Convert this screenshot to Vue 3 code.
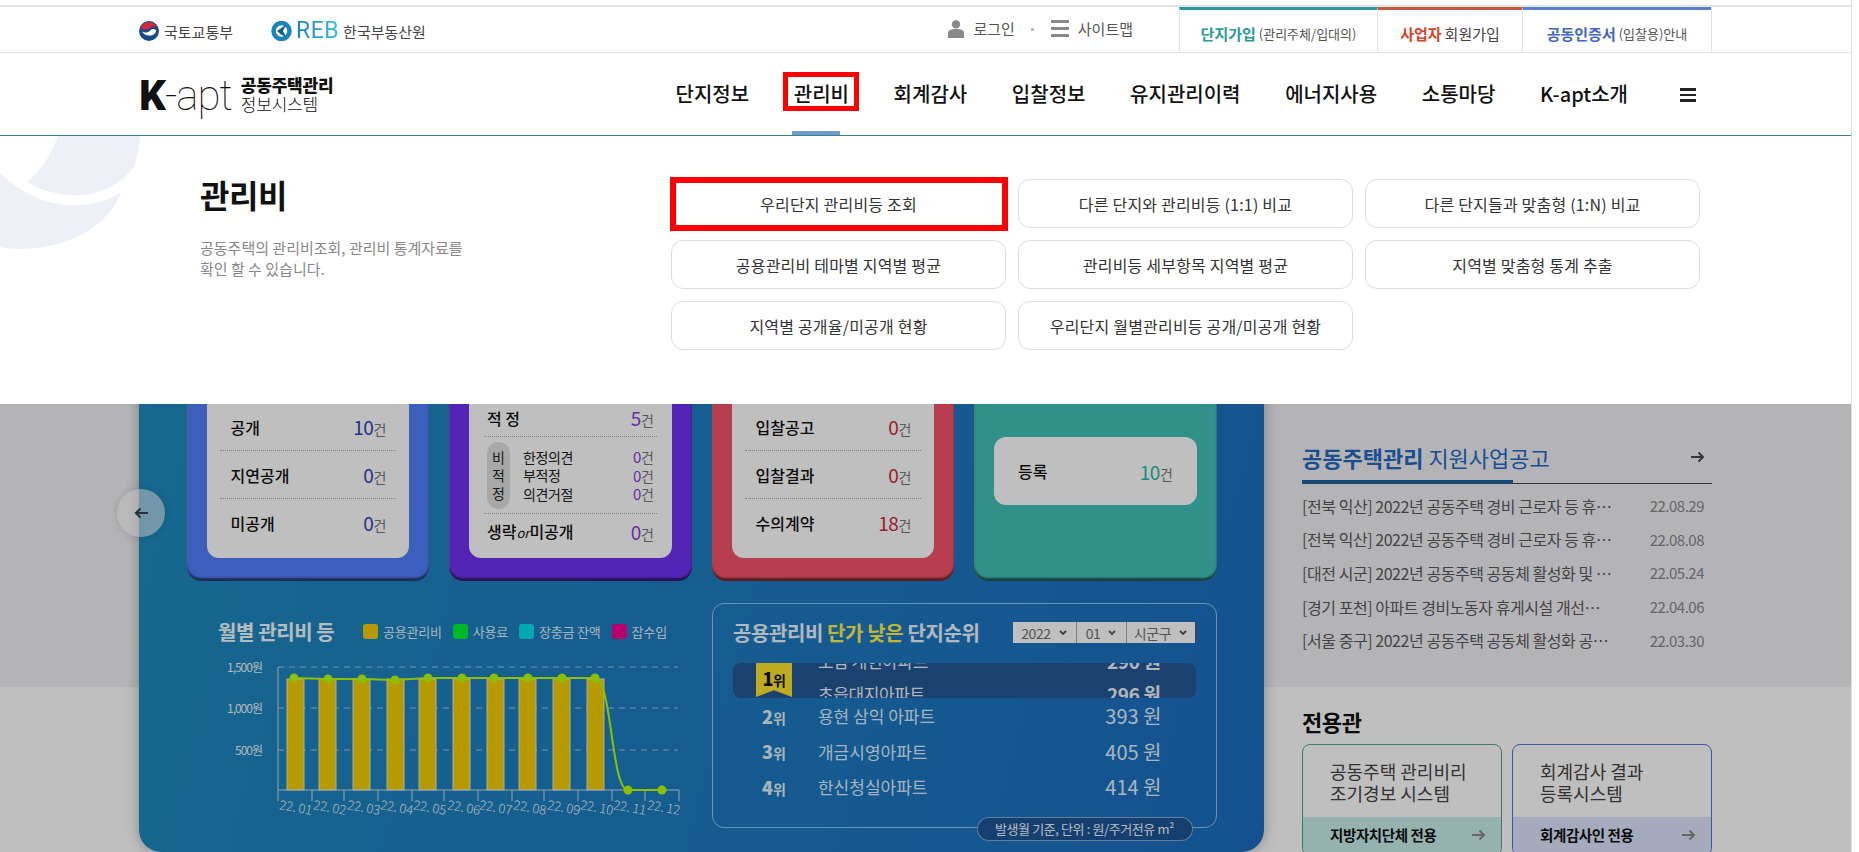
<template>
  <div class="page">
    <!-- 상단 유틸 바 -->
    <div class="top-bar">
      <div class="org org-molit">
        <svg width="20" height="20" viewBox="0 0 20 20">
          <circle cx="10" cy="10" r="10" fill="#174a8c" />
          <path d="M1.2 8.6A9 9 0 0 1 18.6 7.6C17 5 13.6 4.6 11.6 6.6 9.6 9 6 9.4 3.6 7.4 2.6 6.8 1.8 7.4 1.2 8.6Z" fill="#d5283a" />
          <path d="M3 10.4C5.6 12 9 11.8 11.2 9.4 13 7.4 16 7.6 17.2 9.8 16.4 13.4 13.2 15 10 14.6 6.8 14.2 4 12.8 3 10.4Z" fill="#fff" />
        </svg>
        <span>국토교통부</span>
      </div>
      <div class="org org-reb">
        <svg width="21" height="20" viewBox="0 0 21 20">
          <circle cx="10.5" cy="10" r="8" fill="none" stroke="#1a86b8" stroke-width="4.5" />
          <path d="M6 10 11 6.5 15 4 12 10 15 16 10 13.5Z" fill="#0f5d8c" />
        </svg>
        <span class="reb-mark">REB</span>
        <span>한국부동산원</span>
      </div>
      <div class="util">
        <svg width="16" height="18" viewBox="0 0 16 18" fill="#8a8a8a">
          <circle cx="8" cy="4.4" r="4.2" />
          <path d="M0 18V13C0 10 3 9 8 9S16 10 16 13V18Z" />
        </svg>
        <span class="util-text">로그인</span>
        <i class="util-dot"></i>
        <span class="util-burger"><b></b><b></b><b></b></span>
        <span class="util-text">사이트맵</span>
      </div>
      <div class="tabs">
        <a v-for="tab in tabs" :key="tab.strong" class="tab" :class="tab.cls">
          <strong>{{ tab.strong }}</strong>
          <span v-if="tab.big" class="tab-big"> {{ tab.big }}</span>
          <span v-if="tab.small" class="tab-small"> {{ tab.small }}</span>
        </a>
      </div>
    </div>

    <!-- 메인 메뉴 -->
    <div class="nav">
      <div class="logo">
        <div class="logo-mark"><b>K</b><span>-apt</span></div>
        <div class="logo-sub">
          <strong>공동주택관리</strong>
          <span>정보시스템</span>
        </div>
      </div>
      <ul class="menu">
        <li v-for="(m, i) in menus" :key="m" :class="{ active: i === 1 }">
          <span class="menu-text">{{ m }}</span>
        </li>
      </ul>
      <div class="nav-burger"><b></b><b></b><b></b></div>
    </div>

    <div class="stage">
      <div class="main-card">
        <div class="summary">
          <div class="card card-blue">
            <div class="inner">
              <div class="rows">
                <div v-for="r in openRows" :key="r.label" class="row">
                  <span class="row-label">{{ r.label }}</span>
                  <span class="row-num"><em>{{ r.num }}</em>건</span>
                </div>
              </div>
            </div>
          </div>
          <div class="card card-purple">
            <div class="inner">
              <div class="audit">
                <div class="row audit-row">
                  <span class="row-label">적 정</span>
                  <span class="row-num"><em>5</em>건</span>
                </div>
                <div class="audit-sub">
                  <div class="audit-pill"><span>비</span><span>적</span><span>정</span></div>
                  <div class="audit-list">
                    <div v-for="s in auditRows" :key="s" class="audit-item">
                      <span>{{ s }}</span>
                      <span class="row-num small"><em>0</em>건</span>
                    </div>
                  </div>
                </div>
                <div class="row audit-row last">
                  <span class="row-label">생략<small>or</small>미공개</span>
                  <span class="row-num"><em>0</em>건</span>
                </div>
              </div>
            </div>
          </div>
          <div class="card card-red">
            <div class="inner">
              <div class="rows">
                <div v-for="r in bidRows" :key="r.label" class="row">
                  <span class="row-label">{{ r.label }}</span>
                  <span class="row-num"><em>{{ r.num }}</em>건</span>
                </div>
              </div>
            </div>
          </div>
          <div class="card card-teal">
            <div class="inner inner-single">
              <span class="row-label">등록</span>
              <span class="row-num"><em>10</em>건</span>
            </div>
          </div>
        </div>

        <div class="lower">
          <div class="chart-col">
            <div class="chart-head">
              <h3>월별 관리비 등</h3>
              <ul class="legend">
                <li v-for="l in legend" :key="l.name">
                  <i :style="{ background: l.color }"></i>{{ l.name }}
                </li>
              </ul>
            </div>
            <svg class="chart" width="500" height="170" viewBox="190 655 500 170">
              <line v-for="g in grid" :key="g.y" x1="278" x2="678" :y1="g.y" :y2="g.y" class="grid-line" />
              <text v-for="g in grid" :key="g.label" x="262" :y="g.y + 5" text-anchor="end" class="y-label">{{ g.label }}</text>
              <rect v-for="b in bars" :key="b" :x="b" y="679" width="17" height="111" class="bar" />
              <path d="M278 667V790H679V801" class="axis" />
              <line v-for="t in ticks" :key="t" :x1="t" :x2="t" y1="790" y2="801" class="axis" />
              <path :d="linePath" class="trend" />
              <circle v-for="p in points" :key="p.x" :cx="p.x" :cy="p.y" r="4.5" class="dot" />
              <text v-for="m in months" :key="m.label" :transform="`translate(${m.x + 1} 812) rotate(10)`" text-anchor="middle" class="x-label">{{ m.label }}</text>
            </svg>
          </div>

          <div class="rank">
            <div class="rank-head">
              <h3>공용관리비 <span>단가 낮은</span> 단지순위</h3>
              <div class="selects">
                <div v-for="s in selects" :key="s.text" class="sel" :class="s.cls">
                  {{ s.text }}
                  <svg width="8" height="6" viewBox="0 0 8 6"><path d="M1 1 4 4 7 1" fill="none" stroke="#555" stroke-width="1.8" /></svg>
                </div>
              </div>
            </div>
            <div class="ticker">
              <div class="ticker-track">
                <div v-for="t in tickerRows" :key="t.name" class="ticker-row">
                  <span>{{ t.name }}</span>
                  <b>{{ t.cost }} 원</b>
                </div>
              </div>
              <div class="ribbon"><b>1</b>위</div>
            </div>
            <div v-for="r in ranks" :key="r.no" class="rank-row">
              <span class="rank-no"><b>{{ r.no }}</b>위</span>
              <span class="rank-name">{{ r.name }}</span>
              <span>{{ r.cost }} 원</span>
            </div>
            <div class="rank-note">발생월 기준, 단위 : 원/주거전유 m²</div>
          </div>
        </div>
      </div>

      <div class="side">
        <div class="notice-head">
          <h3><strong>공동주택관리</strong> 지원사업공고</h3>
          <svg class="notice-arrow" width="14" height="12" viewBox="0 0 14 12"><path d="M0 6H12M7.5 1.5 12 6 7.5 10.5" fill="none" stroke="#4a4a4a" stroke-width="2" /></svg>
        </div>
        <ul class="notices">
          <li v-for="n in notices" :key="n.date">
            <span class="notice-title">{{ n.title }}</span>
            <span class="notice-date">{{ n.date }}</span>
          </li>
        </ul>
        <h3 class="only-title">전용관</h3>
        <div class="only-cards">
          <div v-for="o in onlyCards" :key="o.foot" class="only" :class="o.cls">
            <div class="only-body">{{ o.line1 }}<br />{{ o.line2 }}</div>
            <div class="only-foot">
              <span>{{ o.foot }}</span>
              <svg width="14" height="12" viewBox="0 0 14 12"><path d="M0 6H12M7.5 1.5 12 6 7.5 10.5" fill="none" stroke="#8a8a8a" stroke-width="2" /></svg>
            </div>
          </div>
        </div>
      </div>

      <div class="prev-btn">
        <svg width="14" height="12" viewBox="0 0 14 12"><path d="M14 6H2M6.5 1.5 2 6 6.5 10.5" fill="none" stroke="#33444e" stroke-width="2.2" /></svg>
      </div>

      <!-- 메뉴 열림 시 딤 처리 -->
      <div class="dim"></div>

      <div class="panel">
        <svg class="panel-deco" width="150" height="120" viewBox="0 136 150 120">
          <path d="M58 136H140C139 150 137 160 133 168 118 187 95 197 70 195 55 194 40 190 27 182 42 170 50 155 58 136Z" fill="#edf1f7" />
          <path d="M0 173C20 192 45 204 67 205 90 206 107 202 121 192 110 225 70 249 18 249 12 249 5 248 0 247Z" fill="#edf1f7" />
        </svg>
        <div class="panel-info">
          <h2>관리비</h2>
          <p>공동주택의 관리비조회, 관리비 통계자료를<br />확인 할 수 있습니다.</p>
        </div>
        <div class="panel-links">
          <a v-for="(p, i) in panelLinks" :key="p" class="panel-link" :class="{ marked: i === 0 }">{{ p }}</a>
        </div>
      </div>
    </div>
  </div>
</template>

<script setup>
const tabs = [
  { strong: '단지가입', small: '(관리주체/입대의)', cls: 'tab-teal' },
  { strong: '사업자', big: '회원가입', cls: 'tab-red' },
  { strong: '공동인증서', small: '(입찰용)안내', cls: 'tab-blue' }
]

const menus = ['단지정보', '관리비', '회계감사', '입찰정보', '유지관리이력', '에너지사용', '소통마당', 'K-apt소개']

const panelLinks = [
  '우리단지 관리비등 조회',
  '다른 단지와 관리비등 (1:1) 비교',
  '다른 단지들과 맞춤형 (1:N) 비교',
  '공용관리비 테마별 지역별 평균',
  '관리비등 세부항목 지역별 평균',
  '지역별 맞춤형 통계 추출',
  '지역별 공개율/미공개 현황',
  '우리단지 월별관리비등 공개/미공개 현황'
]

const openRows = [
  { label: '공개', num: 10 },
  { label: '지연공개', num: 0 },
  { label: '미공개', num: 0 }
]
const auditRows = ['한정의견', '부적정', '의견거절']
const bidRows = [
  { label: '입찰공고', num: 0 },
  { label: '입찰결과', num: 0 },
  { label: '수의계약', num: 18 }
]

const legend = [
  { name: '공용관리비', color: '#f5cd00' },
  { name: '사용료', color: '#00f535' },
  { name: '장충금 잔액', color: '#00e0eb' },
  { name: '잡수입', color: '#f50093' }
]

const grid = [
  { y: 667, label: '1,500원' },
  { y: 708, label: '1,000원' },
  { y: 750, label: '500원' }
]
const bars = [287, 319, 353, 387, 419, 453, 487, 519, 553, 587]
const ticks = [278, 312, 344, 378, 412, 444, 478, 512, 544, 578, 612, 645]
const pointX = [294, 328, 362, 395, 428, 462, 494, 528, 562, 595, 628, 662]
const pointY = [678, 679, 679, 680, 678, 678, 678, 678, 678, 678, 790, 790]
const points = pointX.map((x, i) => ({ x, y: pointY[i] }))
const linePath =
  points.slice(0, 10).map((p, i) => `${i ? 'L' : 'M'}${p.x} ${p.y}`).join(' ') +
  ' C612 678 611 790 628 790 L662 790'
const months = pointX.map((x, i) => ({ x, label: `22. ${String(i + 1).padStart(2, '0')}` }))

const selects = [
  { text: '2022', cls: 'sel-year' },
  { text: '01', cls: 'sel-month' },
  { text: '시군구', cls: 'sel-area' }
]
const tickerRows = [
  { name: '보람 개현아파트', cost: 290 },
  { name: '초읍대지아파트', cost: 296 }
]
const ranks = [
  { no: 2, name: '용현 삼익 아파트', cost: 393 },
  { no: 3, name: '개금시영아파트', cost: 405 },
  { no: 4, name: '한신청실아파트', cost: 414 }
]

const notices = [
  { title: '[전북 익산] 2022년 공동주택 경비 근로자 등 휴게시설 개선 지원사업', date: '22.08.29' },
  { title: '[전북 익산] 2022년 공동주택 경비 근로자 등 휴게시설 지원', date: '22.08.08' },
  { title: '[대전 시군] 2022년 공동주택 공동체 활성화 및 지원사업 공고', date: '22.05.24' },
  { title: '[경기 포천] 아파트 경비노동자 휴게시설 개선사업 안내', date: '22.04.06' },
  { title: '[서울 중구] 2022년 공동주택 공동체 활성화 공모사업', date: '22.03.30' }
]

const onlyCards = [
  { line1: '공동주택 관리비리', line2: '조기경보 시스템', foot: '지방자치단체 전용', cls: 'only-teal' },
  { line1: '회계감사 결과', line2: '등록시스템', foot: '회계감사인 전용', cls: 'only-blue' }
]
</script>

<style scoped>
.page {
  width: 1851px;
  height: 852px;
  overflow: hidden;
  border-right: 1px solid #dedede;
  background: #fff;
  font-family: "Noto Sans CJK KR", "Noto Sans", sans-serif;
  color: #333;
  letter-spacing: -0.4px;
}

h2, h3, p, ul {
  margin: 0;
  padding: 0;
  list-style: none;
}

em {
  font-style: normal;
}

/* top bar */
.top-bar {
  display: flex;
  align-items: center;
  height: 45px;
  margin-top: 5px;
  padding: 0 139px;
  border-top: 2px solid #e1e5e5;
  border-bottom: 1px solid #e6e6e6;
  box-sizing: content-box;
}

.org {
  display: flex;
  align-items: center;
  gap: 5px;
  font-size: 15px;
  letter-spacing: 0;
  color: #444;
  padding-top: 3px;
}

.org-reb {
  margin-left: 38px;
  gap: 4px;
}

.reb-mark {
  font-family: Roboto, sans-serif;
  font-size: 23px;
  line-height: 20px;
  font-weight: 400;
  letter-spacing: 0.5px;
  color: transparent;
  background: linear-gradient(90deg, #1f7fc0, #35c0e8);
  -webkit-background-clip: text;
  background-clip: text;
}

.util {
  display: flex;
  align-items: center;
  margin-left: auto;
  margin-right: 46px;
  margin-top: -2px;
  font-size: 15px;
  letter-spacing: 0;
  color: #555;
}

.util-text {
  margin-left: 9px;
}

.util-dot {
  width: 3px;
  height: 3px;
  margin: 2px 17px 0 16px;
  background: #bbb;
}

.util-burger {
  display: flex;
  flex-direction: column;
  gap: 4px;
  width: 18px;
}

.util-burger b {
  height: 3px;
  background: #8a8a8a;
}

.tabs {
  display: flex;
  align-self: stretch;
  border-right: 1px solid #e2e2e2;
}

.tab {
  display: flex;
  align-items: center;
  justify-content: center;
  gap: 3px;
  box-sizing: border-box;
  height: 45px;
  padding-top: 4px;
  border-top: 3px solid;
  border-left: 1px solid #e2e2e2;
  font-size: 15px;
  letter-spacing: 0;
  white-space: pre;
}

.tab strong {
  font-weight: 700;
}

.tab-big {
  color: #444;
}

.tab-small {
  font-size: 13px;
  color: #555;
}

.tab-teal { width: 198px; border-top-color: #2a9a9e; }
.tab-teal strong { color: #2a9a9e; }
.tab-red { width: 145px; border-top-color: #c9573f; }
.tab-red strong { color: #d2452c; }
.tab-blue { width: 189px; border-top-color: #5a7ed0; }
.tab-blue strong { color: #3f66c2; }

/* nav */
.nav {
  display: flex;
  align-items: stretch;
  height: 82px;
  padding: 0 155px 0 139px;
  border-bottom: 1px solid #3f7f90;
  box-sizing: content-box;
}

.logo {
  display: flex;
  align-items: center;
  gap: 9px;
  padding-top: 4px;
}

.logo-mark {
  font-family: Roboto, sans-serif;
  font-size: 42px;
  line-height: 48px;
  letter-spacing: -1px;
  color: #111;
}

.logo-mark b {
  font-weight: 900;
}

.logo-mark span {
  font-weight: 100;
}

.logo-sub {
  display: flex;
  flex-direction: column;
  font-size: 17px;
  line-height: 19px;
  letter-spacing: -0.2px;
  color: #111;
  margin-top: -5px;
}

.logo-sub strong {
  font-weight: 900;
}

.logo-sub span {
  font-weight: 300;
}

.menu {
  display: flex;
  gap: 44.65px;
  margin-left: auto;
  font-size: 20px;
  font-weight: 500;
  color: #111;
  letter-spacing: 0;
}

.menu li {
  position: relative;
  display: flex;
  align-items: center;
}

.menu-text {
  position: relative;
  line-height: 28px;
}

.active .menu-text::after {
  content: '';
  position: absolute;
  inset: -8px -10px -3px -11px;
  border: 5px solid #f00;
}

.active::before {
  content: '';
  position: absolute;
  left: -2px;
  bottom: 0;
  width: 48px;
  height: 4px;
  background: #6f9fc8;
}

.nav-burger {
  display: flex;
  flex-direction: column;
  justify-content: center;
  gap: 3px;
  width: 16px;
  margin-left: 52px;
  padding-top: 2px;
}

.nav-burger b {
  height: 2.5px;
  background: #222;
}

/* stage */
.stage {
  position: relative;
  display: flex;
  height: 716px;
  padding-left: 139px;
  background: linear-gradient(#f1f1f5 551px, #fff 551px);
}

.main-card {
  width: 1125px;
  height: 652px;
  margin-top: 64px;
  padding: 140px 47.5px 0;
  box-sizing: border-box;
  border-radius: 22px;
  background: linear-gradient(105deg, #1f8cbf, #1c6dc0);
  box-shadow: 0 0 14px rgba(0, 0, 0, 0.3);
}

.summary {
  display: grid;
  grid-template-columns: repeat(4, 242.5px);
  gap: 20px;
}

.card {
  display: flex;
  flex-direction: column;
  box-sizing: border-box;
  height: 241px;
  padding: 38px 20px 23px;
  border-radius: 14px;
  box-shadow: inset 0 -3px 2px rgba(0, 0, 0, 0.55), inset 1px 0 1px rgba(255, 255, 255, 0.2);
}

.card-blue { background: #517ffc; }
.card-purple { background: #7131f5; }
.card-red { background: #f55368; }
.card-teal { background: #40c1b8; }
.card-blue em { color: #2d44b8; }
.card-purple em { color: #8a3ee0; }
.card-red em { color: #c92a40; }
.card-teal em { color: #29b8ab; }

.inner {
  flex: 1;
  border-radius: 12px;
  background: #fff;
}

.inner-single {
  flex: none;
  display: flex;
  align-items: center;
  justify-content: space-between;
  height: 68px;
  margin-top: 59px;
  padding: 0 24px;
}

.rows {
  margin: 25px 13px 0;
}

.row {
  display: flex;
  align-items: center;
  justify-content: space-between;
  height: 47px;
  padding: 0 10px 0 11px;
  border-bottom: 1px dotted #aaa;
}

.row:last-child {
  border-bottom: 0;
}

.row-label {
  font-size: 16px;
  font-weight: 500;
  letter-spacing: 0;
  color: #111;
}

.row-label small {
  font-size: 13px;
  font-weight: 400;
  font-style: italic;
}

.row-num {
  font-size: 14px;
  color: #777;
}

.row-num em {
  font-size: 19px;
}

.row-num.small em {
  font-size: 15px;
}

.audit {
  margin: 21px 15px 0;
}

.audit-row {
  height: 37px;
  padding: 0 3px;
}

.audit-row.last {
  height: 34px;
}

.audit-sub {
  display: flex;
  align-items: center;
  height: 76px;
  padding: 0 3px;
  border-bottom: 1px dotted #aaa;
}

.audit-pill {
  display: flex;
  flex-direction: column;
  align-items: center;
  justify-content: center;
  width: 22.5px;
  height: 67px;
  gap: 0;
  border-radius: 12px;
  background: #e1e1e1;
  font-size: 14px;
  line-height: 18px;
  color: #222;
}

.audit-list {
  flex: 1;
  margin-left: 13.5px;
}

.audit-item {
  display: flex;
  align-items: center;
  justify-content: space-between;
  height: 18.5px;
  font-size: 14px;
  color: #222;
}

/* chart */
.lower {
  display: flex;
  margin-top: 22px;
}

.chart-col {
  width: 526px;
  padding-left: 3.5px;
  box-sizing: border-box;
}

.chart-head {
  display: flex;
  align-items: center;
  height: 22px;
  margin: 17px 0 13px;
  padding-left: 28px;
}

.chart-head h3 {
  width: 117px;
  font-size: 20px;
  font-weight: 700;
  white-space: nowrap;
  color: #f0fbff;
}

.legend {
  display: flex;
  gap: 11px;
  margin-left: 28px;
  font-size: 13px;
  letter-spacing: -0.2px;
  color: #dff0fa;
}

.legend li {
  display: flex;
  align-items: center;
  gap: 5px;
  white-space: nowrap;
}

.legend i {
  width: 15px;
  height: 15px;
  border-radius: 3px;
}

.chart {
  display: block;
}

.grid-line {
  stroke: #e0eef8;
  stroke-opacity: 0.65;
  stroke-dasharray: 6 5;
}

.axis {
  fill: none;
  stroke: #c8dde8;
  stroke-width: 1;
}

.bar {
  fill: #f5cd00;
  stroke: #e8e8d8;
  stroke-width: 1;
}

.trend {
  fill: none;
  stroke: #bbff00;
  stroke-width: 2;
}

.dot {
  fill: #bbff00;
}

.y-label {
  font-size: 12px;
  letter-spacing: -1px;
  fill: #e8f4fb;
}

.x-label {
  font-size: 13px;
  font-weight: 300;
  letter-spacing: -0.2px;
  fill: #e8f4fb;
}

/* rank */
.rank {
  position: relative;
  box-sizing: border-box;
  width: 505px;
  height: 225px;
  padding: 18px 20px 0;
  border: 1px solid rgba(210, 235, 250, 0.65);
  border-radius: 12px;
}

.rank-head {
  display: flex;
  align-items: center;
  justify-content: space-between;
  height: 21px;
}

.rank-head h3 {
  font-size: 20px;
  font-weight: 700;
  white-space: nowrap;
  letter-spacing: -0.4px;
  color: #eaf6ff;
}

.rank-head h3 span {
  color: #fff24a;
}

.selects {
  display: flex;
  height: 21px;
  background: #fff;
  border-right: 1px solid #555;
  font-size: 14px;
  color: #707070;
}

.sel {
  display: flex;
  align-items: center;
  justify-content: center;
  gap: 8px;
  box-sizing: border-box;
  border-left: 1px solid #aaa;
}

.sel:first-child {
  border-left: 0;
}

.sel-year { width: 63px; }
.sel-month { width: 50px; }
.sel-area { width: 69px; }

.ticker {
  position: relative;
  height: 35px;
  margin-top: 20px;
  overflow: hidden;
  border-radius: 8px;
  background: #245895;
}

.ticker-track {
  margin-top: -19.5px;
}

.ticker-row {
  display: flex;
  justify-content: space-between;
  height: 33px;
  padding: 0 35px 0 85px;
  font-size: 17px;
  line-height: 33px;
  color: #e8f4ff;
}

.ticker-row b {
  font-size: 19px;
  font-weight: 700;
}

.ribbon {
  position: absolute;
  left: 23px;
  top: 0;
  width: 36px;
  height: 34px;
  padding-top: 4px;
  box-sizing: border-box;
  text-align: center;
  font-size: 14px;
  font-weight: 700;
  line-height: 22px;
  color: #111;
  background: #ffe52b;
  clip-path: polygon(0 0, 100% 0, 100% 100%, 50% 80%, 0 100%);
}

.ribbon b {
  font-size: 18px;
}

.rank-row {
  display: grid;
  grid-template-columns: 55px 1fr auto;
  align-items: center;
  height: 35.5px;
  padding: 0 34px 0 29px;
  font-size: 20px;
  letter-spacing: 0;
  color: #dff0fa;
}

.rank-no {
  font-size: 14px;
  font-weight: 700;
}

.rank-no b {
  font-size: 18px;
}

.rank-name {
  padding-left: 1px;
  font-size: 17px;
}

.rank-note {
  position: absolute;
  right: 23px;
  bottom: -14px;
  box-sizing: border-box;
  width: 216px;
  height: 24px;
  border: 1px solid rgba(210, 235, 250, 0.55);
  border-radius: 12px;
  background: #1d5495;
  text-align: center;
  font-size: 13px;
  line-height: 22px;
  color: #eff8ff;
}

/* side */
.side {
  width: 410px;
  margin-left: 38px;
  padding-top: 308px;
  box-sizing: border-box;
}

.notice-head {
  display: flex;
  align-items: flex-start;
  justify-content: space-between;
  height: 39px;
  padding-right: 7px;
  border-bottom: 1px solid #444;
  position: relative;
}

.notice-head::after {
  content: '';
  position: absolute;
  left: 0;
  bottom: -1px;
  width: 211px;
  height: 4px;
  background: #23619f;
}

.notice-head h3 {
  font-size: 22px;
  line-height: 26px;
  font-weight: 400;
  letter-spacing: 0;
  color: #2369bf;
  white-space: nowrap;
}

.notice-head strong {
  font-weight: 700;
}

.notice-arrow {
  margin-top: 7px;
}

.notices {
  margin-top: 5px;
}

.notices li {
  display: flex;
  align-items: center;
  justify-content: space-between;
  height: 33.6px;
  padding-right: 8px;
  font-size: 16px;
  letter-spacing: -0.45px;
  color: #5a5a5a;
}

.notice-title {
  width: 312px;
  overflow: hidden;
  white-space: nowrap;
  text-overflow: ellipsis;
}

.notice-date {
  color: #888;
  font-size: 15px;
  letter-spacing: -0.5px;
}

.only-title {
  margin-top: 48px;
  font-size: 22px;
  font-weight: 700;
  line-height: 32px;
  color: #111;
}

.only-cards {
  display: flex;
  gap: 10px;
  margin-top: 7px;
}

.only {
  width: 200px;
  height: 112px;
  box-sizing: border-box;
  border: 1px solid;
  border-radius: 8px;
  overflow: hidden;
  background: #fff;
}

.only-body {
  height: 72px;
  padding: 16px 0 0 27px;
  box-sizing: border-box;
  font-size: 18px;
  line-height: 21.7px;
  letter-spacing: 0;
  color: #444;
}

.only-foot {
  display: flex;
  align-items: center;
  justify-content: space-between;
  height: 36px;
  padding: 0 15px 0 27px;
  font-size: 14.5px;
  font-weight: 700;
  color: #111;
}

.only-teal { border-color: #4aa895; }
.only-teal .only-foot { background: #c8eeea; }
.only-blue { border-color: #4f72e0; }
.only-blue .only-foot { background: #dce3fc; }

.prev-btn {
  position: absolute;
  left: 117px;
  top: 353px;
  display: flex;
  align-items: center;
  justify-content: center;
  width: 48px;
  height: 48px;
  border-radius: 50%;
  background: rgba(255, 255, 255, 0.55);
  box-shadow: 0 0 8px rgba(0, 0, 0, 0.15);
}

.dim {
  position: absolute;
  inset: 0;
  background: rgba(0, 0, 0, 0.25);
}

/* dropdown panel */
.panel {
  position: absolute;
  left: 0;
  top: 0;
  display: flex;
  width: 100%;
  height: 268px;
  box-sizing: border-box;
  padding: 43px 0 0 200px;
  background: #fff;
}

.panel-deco {
  position: absolute;
  left: 0;
  top: 0;
}

.panel-info {
  position: relative;
  width: 471px;
}

.panel-info h2 {
  margin-top: -8px;
  font-size: 32px;
  line-height: 46px;
  font-weight: 700;
  letter-spacing: -0.5px;
  color: #111;
}

.panel-info p {
  margin-top: 20px;
  font-size: 15px;
  line-height: 21px;
  letter-spacing: 0;
  color: #888;
}

.panel-links {
  display: grid;
  grid-template-columns: repeat(3, 335px);
  grid-auto-rows: 49px;
  gap: 12px;
  align-content: start;
}

.panel-link {
  position: relative;
  display: flex;
  align-items: center;
  justify-content: center;
  border: 1px solid #ddd;
  border-radius: 12px;
  font-size: 16px;
  letter-spacing: 0.2px;
  color: #333;
}

.marked::after {
  content: '';
  position: absolute;
  inset: -3px -3px -4px -2px;
  border: 6px solid #f00;
}
</style>

<style>
html, body {
  overflow: hidden;
}
</style>
